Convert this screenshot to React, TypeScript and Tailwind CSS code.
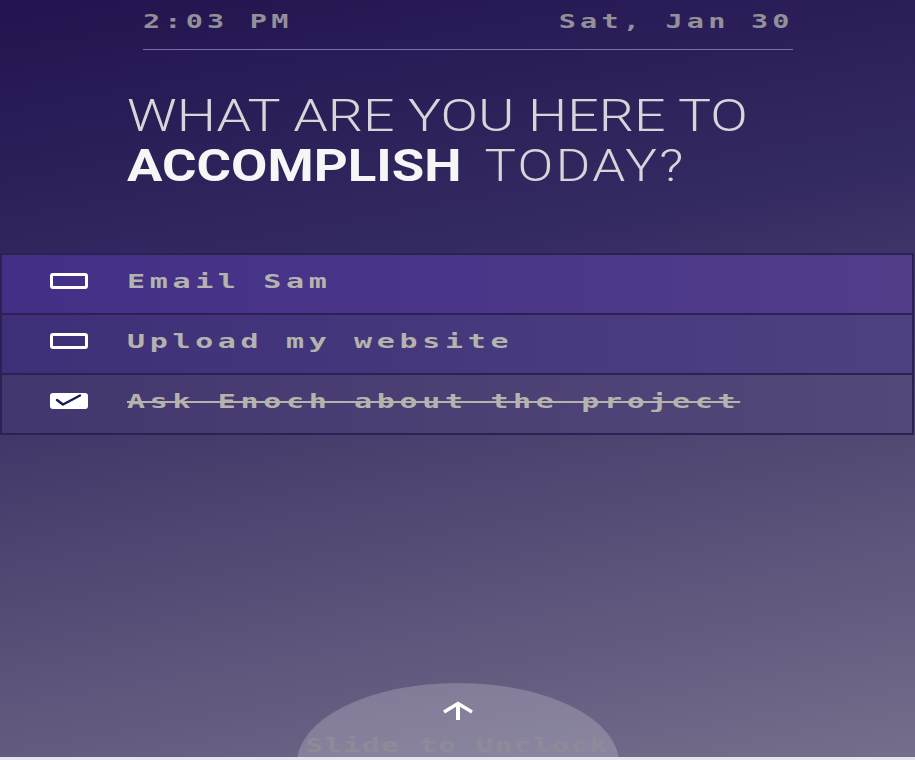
import React from "react";

const mono = "font-['DejaVu_Sans_Mono','Liberation_Mono',monospace]";

type Todo = { text: string; done: boolean; bg: string };

const todos: Todo[] = [
  { text: "Email Sam", done: false, bg: "bg-[linear-gradient(90deg,#432f86,#513d8a)]" },
  { text: "Upload my website", done: false, bg: "bg-[linear-gradient(90deg,#3e2f78,#4e4181)]" },
  { text: "Ask Enoch about the project", done: true, bg: "bg-[linear-gradient(90deg,#42366e,#54487a)]" },
];

function Box({ done }: { done: boolean }) {
  if (done) {
    return (
      <div className="w-[38px] h-[16px] rounded-[3px] bg-white flex items-center justify-center shrink-0">
        <svg width="38" height="16" viewBox="0 0 38 16">
          <path d="M7 7 L13 11.5 L30 2.5" fill="none" stroke="#1b1858" strokeWidth="2.4" strokeLinecap="round" strokeLinejoin="round" />
        </svg>
      </div>
    );
  }
  return <div className="w-[38px] h-[16px] rounded-[3px] border-[3px] border-white shrink-0" />;
}

export default function App() {
  return (
    <div className="w-[915px] h-[760px] bg-[#e6e4ec] overflow-hidden">
      <div className="relative w-[915px] h-[757px] overflow-hidden flex flex-col bg-[linear-gradient(170deg,#23134e_0%,#342a62_35%,#4d4470_60%,#756e8b_100%)]">
        {/* status */}
        <div className="ml-[143px] w-[650px] pt-[7px]">
          <div className={`flex justify-between h-[28px] leading-[28px] text-[19px] font-bold tracking-[2.8px] text-[#929099] ${mono}`}>
            <span className="inline-block origin-left scale-x-[1.5]">2:03 PM</span>
            <span className="inline-block origin-right scale-x-[1.5] mr-[-1px]">Sat, Jan 30</span>
          </div>
          <div className="mt-[14px] h-px bg-[#7a6fa6]" />
        </div>

        {/* heading */}
        <div className="ml-[127px] mt-[41px] font-['Roboto',sans-serif] text-[44px] leading-[50px] text-[#d6d5d8] font-light">
          <div className="origin-left scale-x-[1.26] whitespace-nowrap">WHAT ARE YOU HERE TO</div>
          <div className="origin-left scale-x-[1.2] whitespace-nowrap">
            <span className="font-bold text-[#f6f6f6]">ACCOMPLISH</span>
            <span className="ml-[19px] tracking-[2px]">TODAY?</span>
          </div>
        </div>

        {/* todos */}
        <div className="mt-[62px] w-[914px]">
          {todos.map((t, i) => (
            <div
              key={t.text}
              className={`h-[60px] border-t-2 border-l-2 border-r-2 border-[#2b2152] ${i === todos.length - 1 ? "h-[62px] border-b-2" : ""} ${t.bg} flex items-center pl-[48px] pb-[6px]`}
            >
              <Box done={t.done} />
              <span
                className={`ml-[39px] inline-block origin-left scale-x-[1.5] whitespace-nowrap text-[20px] font-bold leading-[28px] tracking-[3.1px] text-[#b4b3ad] ${mono} ${t.done ? "line-through decoration-[#b4b3ad] decoration-2" : ""}`}
              >
                {t.text}
              </span>
            </div>
          ))}
        </div>

        {/* slide to unlock */}
        <div className="mt-auto self-center h-[74px] w-[322px] overflow-hidden">
          <div className="w-[322px] h-[160px] rounded-[50%] bg-white/20 flex flex-col items-center pt-[18px]">
            <svg width="34" height="20" viewBox="0 0 34 20">
              <path d="M17 2.5 V19" stroke="white" strokeWidth="4" fill="none" />
              <path d="M3 11 L17 2.5 L31 11" stroke="white" strokeWidth="3.4" fill="none" strokeLinejoin="miter" />
            </svg>
            <div className={`mt-[12px] inline-block origin-center scale-x-[1.5] whitespace-nowrap text-[19px] font-bold leading-[24px] tracking-[1.2px] text-[#8f8a99] ${mono}`}>
              Slide to Unclock
            </div>
          </div>
        </div>
      </div>
    </div>
  );
}
